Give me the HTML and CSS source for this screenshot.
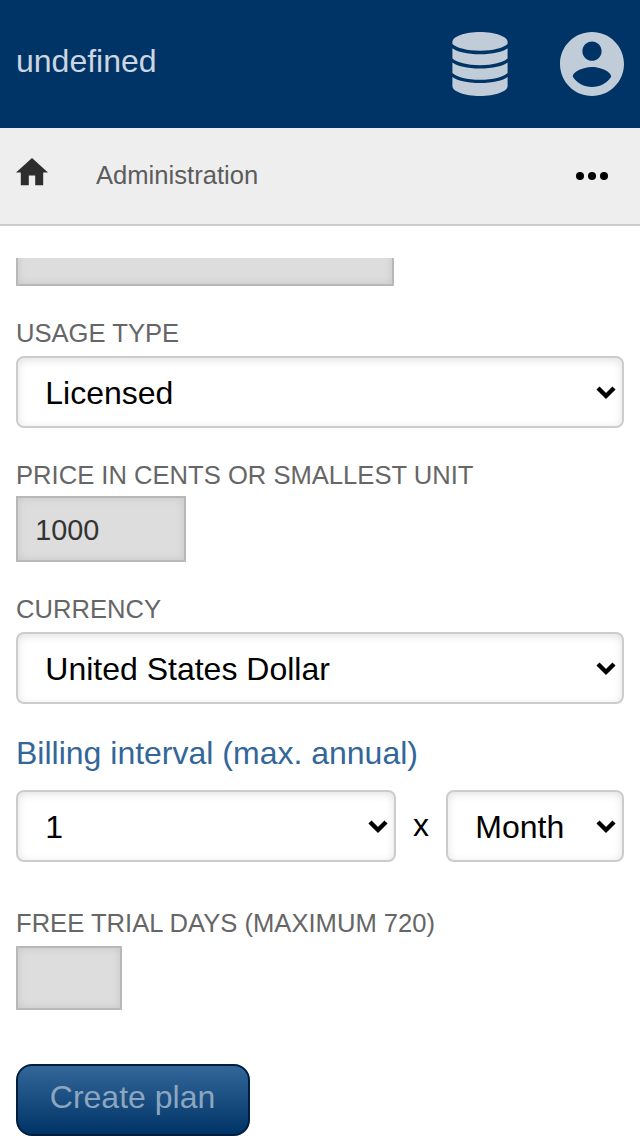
FILE: index.html
```html
<!DOCTYPE html>
<html lang="en">
<head>
<meta charset="utf-8">
<title>Create plan</title>
<link rel="stylesheet" href="styles.css">
</head>
<body>
<header class="header">
  <span class="header-title">undefined</span>
  <nav class="header-icons">
    <svg class="icon-database" viewBox="0 0 56 64">
      <path d="M.4 10C.4 4.5 12.7 0 28 0S55.6 4.5 55.6 10V12C51 16 41 18.7 28 18.7S5 16 .4 12Z"/>
      <path d="M.4 16.2C5 19.8 15 22.2 28 22.2S51 19.8 55.6 16.2V26.6C51 30.6 41 33.2 28 33.2S5 30.6 .4 26.6Z"/>
      <path d="M.4 30.6C5 34.2 15 36.6 28 36.6S51 34.2 55.6 30.6V41C51 45 41 47.8 28 47.8S5 45 .4 41Z"/>
      <path d="M.4 45C5 48.6 15 51 28 51S51 48.6 55.6 45V54C55.6 59.5 43.3 64 28 64S.4 59.5 .4 54Z"/>
    </svg>
    <svg class="icon-account" viewBox="2 2 20 20">
      <path d="M12 2C6.48 2 2 6.48 2 12s4.48 10 10 10 10-4.48 10-10S17.52 2 12 2zm0 3c1.66 0 3 1.34 3 3s-1.34 3-3 3-3-1.34-3-3 1.34-3 3-3zm0 14.2c-2.5 0-4.71-1.28-6-3.22.03-1.99 4-3.08 6-3.08 1.99 0 5.97 1.09 6 3.08-1.29 1.94-3.5 3.22-6 3.22z"/>
    </svg>
  </nav>
</header>
<nav class="breadcrumb">
  <svg class="icon-home" viewBox="2 3 20 17"><path d="M10 20v-6h4v6h5v-8h3L12 3 2 12h3v8z"/></svg>
  <span class="crumb">Administration</span>
  <svg class="icon-more" viewBox="0 0 32 8"><circle cx="4" cy="4" r="4"/><circle cx="16" cy="4" r="4"/><circle cx="28" cy="4" r="4"/></svg>
</nav>
<main class="content">
  <div class="clipped"><input class="input input-wide" type="text"></div>

  <label class="label label-usage">USAGE TYPE</label>
  <div class="select">
    <select class="select-field"><option>Licensed</option></select>
    <svg class="chevron" viewBox="0 0 20 14"><path d="M2 2l8 8 8-8"/></svg>
  </div>

  <label class="label label-price">PRICE IN CENTS OR SMALLEST UNIT</label>
  <input class="input input-price" type="text" value="1000">

  <label class="label label-currency">CURRENCY</label>
  <div class="select">
    <select class="select-field"><option>United States Dollar</option></select>
    <svg class="chevron" viewBox="0 0 20 14"><path d="M2 2l8 8 8-8"/></svg>
  </div>

  <h2 class="heading">Billing interval (max. annual)</h2>
  <div class="interval">
    <div class="select select-count">
      <select class="select-field"><option>1</option></select>
      <svg class="chevron" viewBox="0 0 20 14"><path d="M2 2l8 8 8-8"/></svg>
    </div>
    <span class="times">x</span>
    <div class="select select-unit">
      <select class="select-field"><option>Month</option></select>
      <svg class="chevron" viewBox="0 0 20 14"><path d="M2 2l8 8 8-8"/></svg>
    </div>
  </div>

  <label class="label label-trial">FREE TRIAL DAYS (MAXIMUM 720)</label>
  <input class="input input-trial" type="text">

  <button class="button" type="button">Create plan</button>
</main>
</body>
</html>
```
FILE: styles.css
```css
* {
  box-sizing: border-box;
}

body {
  margin: 0;
  height: 1136px;
  overflow: hidden;
  background: #fff;
  font-family: "Liberation Sans", Arial, sans-serif;
  font-size: 32px;
  color: #000;
}

svg {
  display: block;
  flex: none;
}

.header {
  display: flex;
  justify-content: space-between;
  align-items: center;
  height: 128px;
  padding: 0 16px;
  background: #003366;
}

.header-title {
  line-height: 36px;
  margin-bottom: 6px;
  color: #ccd6e0;
}

.header-icons {
  display: flex;
  gap: 52px;
  fill: #c0ccd8;
}

.icon-database {
  width: 56px;
  height: 64px;
}

.icon-account {
  width: 64px;
  height: 64px;
}

.breadcrumb {
  display: flex;
  align-items: center;
  height: 98px;
  padding: 0 32px 0 16px;
  background: #eee;
  border-bottom: 2px solid #ccc;
}

.icon-home {
  width: 32px;
  height: 27.2px;
  margin-bottom: 8px;
  fill: #2d2d2d;
}

.crumb {
  margin-left: 48px;
  font-size: 25.6px;
  line-height: 30px;
  margin-bottom: 2px;
  color: #5c5c5c;
}

.icon-more {
  width: 32px;
  height: 8px;
  margin-left: auto;
}

.content {
  display: flex;
  flex-direction: column;
  align-items: flex-start;
  padding: 32px 16px 0;
}

.clipped {
  display: flex;
  align-items: flex-end;
  height: 28px;
  overflow: hidden;
}

.input {
  flex: none;
  margin: 0;
  padding: 2px 17px 0 17.2px;
  border: 2px solid #b8b8b8;
  border-radius: 0;
  outline: 0;
  background: #ddd;
  box-shadow: inset 0 0 8px rgba(0, 0, 0, 0.1);
  font: 28.8px "Liberation Sans", Arial, sans-serif;
  color: #333;
}

.input-wide {
  width: 378px;
  height: 66px;
}

.input-price {
  width: 170px;
  height: 66px;
}

.input-trial {
  width: 106px;
  height: 64px;
}

.label {
  font-size: 25.6px;
  line-height: 30px;
  white-space: nowrap;
  color: #666;
}

.label-usage {
  margin: 32px 0 8px;
}

.label-price {
  margin: 32px 0 6px;
}

.label-currency {
  margin: 32px 0 8px;
}

.label-trial {
  margin: 46px 0 8px;
}

.select {
  display: grid;
  align-items: center;
  width: 100%;
  height: 72px;
}

.select-field {
  grid-area: 1 / 1;
  width: 100%;
  height: 72px;
  margin: 0;
  padding: 2px 28px 0 27.3px;
  appearance: none;
  border: 2px solid #ccc;
  border-radius: 8px;
  outline: 0;
  background: #fff;
  box-shadow: inset 0 2px 8px rgba(0, 0, 0, 0.12);
  font: 32px "Liberation Sans", Arial, sans-serif;
  color: #000;
}

.chevron {
  grid-area: 1 / 1;
  justify-self: end;
  width: 20px;
  height: 14px;
  margin-right: 8px;
  margin-top: 2px;
  fill: none;
  stroke: #000;
  stroke-width: 4.4;
  pointer-events: none;
}

.heading {
  margin: 31px 0 19px;
  font-size: 32px;
  font-weight: 400;
  line-height: 36px;
  color: #336699;
}

.interval {
  display: flex;
  align-items: center;
  justify-content: space-between;
  width: 100%;
}

.select-count {
  width: 380px;
}

.select-unit {
  width: 178px;
}

.times {
  line-height: 36px;
  margin-bottom: 2px;
}

.button {
  width: 234px;
  height: 72px;
  margin-top: 54px;
  padding: 0 1px 5px 0;
  border: 2px solid #001f3d;
  border-radius: 16px;
  background: linear-gradient(#336699, #003366);
  font: 32px "Liberation Sans", Arial, sans-serif;
  color: #8ca6c0;
}
```
